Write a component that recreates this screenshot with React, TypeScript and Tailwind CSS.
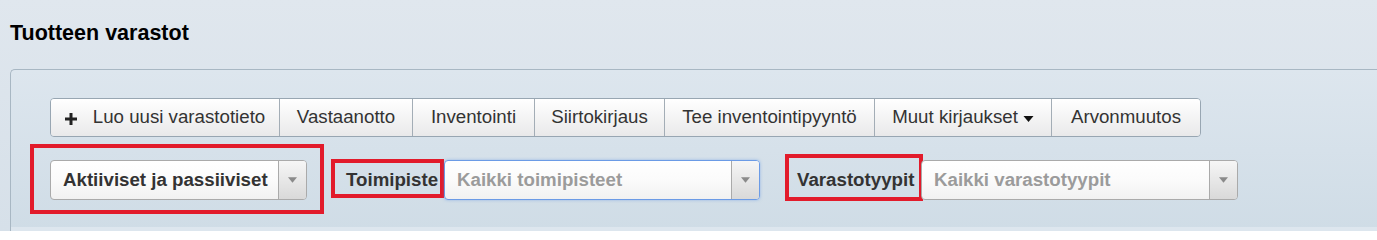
import { ReactNode } from 'react';

const font = { fontFamily: '"Liberation Sans", Arial, sans-serif' };

function Caret({ className }: { className: string }) {
  return (
    <svg viewBox="0 0 10 6" className={className}>
      <path d="M0 0 L10 0 L5 6 Z" fill="currentColor" />
    </svg>
  );
}

function Plus() {
  return (
    <svg viewBox="0 0 12 12" className="w-[12px] h-[12px] mr-[16px] mt-[2px] text-[#222]">
      <path d="M4.5 0 H7.5 V4.5 H12 V7.5 H7.5 V12 H4.5 V7.5 H0 V4.5 H4.5 Z" fill="currentColor" />
    </svg>
  );
}

function Select({
  text,
  placeholder,
  width,
  focused,
  children,
}: {
  text: string;
  placeholder?: boolean;
  width: string;
  focused?: boolean;
  children?: ReactNode;
}) {
  return (
    <div className={`relative ${width} h-[40px]`}>
      <div
        className={`flex h-full rounded-[4px] border bg-gradient-to-b from-white via-[#fbfbfb] to-[#f1f1f1] ${
          focused ? 'border-[#6b9be6] shadow-[0_0_3px_rgba(80,140,230,0.5)]' : 'border-[#aaaaaa]'
        }`}
      >
        <div
          className={`flex-1 flex items-center pl-[12px] text-[18.7px] font-bold whitespace-nowrap ${
            placeholder ? 'text-[#9b9b9b]' : 'text-[#333333]'
          }`}
        >
          {text}
        </div>
        <div className="w-[28px] flex items-center justify-center border-l border-[#aaaaaa] rounded-r-[3px] bg-gradient-to-b from-[#f6f6f6] to-[#d9d9d9]">
          <Caret className="w-[9px] h-[6px] text-[#8a8a8a]" />
        </div>
      </div>
      {children}
    </div>
  );
}

export default function App() {
  const buttons = [
    { label: 'Luo uusi varastotieto', w: 'w-[228px]', plus: true },
    { label: 'Vastaanotto', w: 'w-[133px]' },
    { label: 'Inventointi', w: 'w-[122px]' },
    { label: 'Siirtokirjaus', w: 'w-[130px]' },
    { label: 'Tee inventointipyyntö', w: 'w-[210px]' },
    { label: 'Muut kirjaukset', w: 'w-[177px]', caret: true },
    { label: 'Arvonmuutos', w: 'w-[149px]' },
  ];

  return (
    <div className="w-[1377px] h-[231px] overflow-hidden bg-gradient-to-b from-[#e0e7ee] to-[#d6e0e9]" style={font}>
      <div className="h-[69px] pl-[10px] pt-[20px]">
        <h1 className="text-[21.5px] leading-[26px] font-bold text-black">Tuotteen varastot</h1>
      </div>

      <div className="ml-[10px] h-[162px] border-t border-l border-[#a8b7c3] rounded-tl-[5px] bg-gradient-to-b from-[#dde6ee] to-[#cfdce6] flex flex-col">
        <div className="flex-1 pt-[28px] pl-[39px]">
          <div className="flex w-fit h-[39px] rounded-[4px] border border-[#98a6b2] overflow-hidden">
            {buttons.map((b, i) => (
              <button
                key={b.label}
                className={`${b.w} flex items-center justify-center text-[18.7px] text-[#333333] whitespace-nowrap bg-gradient-to-b from-white to-[#e9e9ea] ${
                  i > 0 ? 'border-l border-[#a3adb6]' : ''
                }`}
              >
                {b.plus && <Plus />}
                {b.label}
                {b.caret && <Caret className="w-[11px] h-[6px] ml-[5px] mt-[2px] text-[#111]" />}
              </button>
            ))}
          </div>

          <div className="flex items-center mt-[23px]">
            <Select text="Aktiiviset ja passiiviset" width="w-[257px]">
              <div className="absolute top-[-16px] bottom-[-14px] left-[-20px] right-[-17px] border-4 border-[#e21b2b] pointer-events-none" />
            </Select>

            <div className="relative ml-[39px] w-[91px] h-[40px] flex items-center text-[18.7px] font-bold text-[#333333] whitespace-nowrap">
              Toimipiste
              <div className="absolute top-[-1px] bottom-[2px] left-[-15px] right-[-7px] border-4 border-[#e21b2b] pointer-events-none" />
            </div>
            <div className="ml-[7px]">
              <Select text="Kaikki toimipisteet" placeholder width="w-[316px]" focused />
            </div>

            <div className="relative ml-[37px] w-[118px] h-[40px] flex items-center text-[18.7px] font-bold text-[#333333] whitespace-nowrap">
              Varastotyypit
              <div className="absolute top-[-6px] bottom-[-1px] left-[-12px] right-[-8px] border-4 border-[#e21b2b] pointer-events-none" />
            </div>
            <div className="ml-[6px]">
              <Select text="Kaikki varastotyypit" placeholder width="w-[317px]" />
            </div>
          </div>
        </div>
        <div className="h-[4px] bg-[#dde6ee]" />
      </div>
    </div>
  );
}
